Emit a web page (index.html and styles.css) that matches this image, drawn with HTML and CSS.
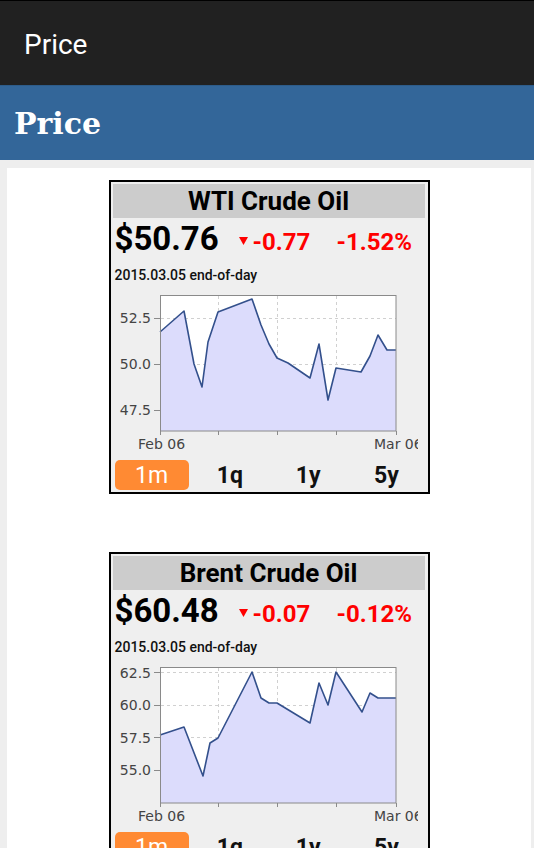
FILE: index.html
```html
<html>
  <head>
    <meta charset="utf-8" />
    <meta name="viewport" content="width=device-width, initial-scale=1.0" />
    <title>Price</title>
    <link rel="stylesheet" href="styles.css">
  </head>
  <body>
    <div class="page">
      <div class="actionbar">Price</div>
      <div class="header">Price</div>
      <div class="content">
        <div class="card">
          <div class="widget">
            <div class="title">WTI Crude Oil</div>
            <div class="quote">
              <span class="price">$50.76</span>
              <span class="change"><svg class="arrow" width="9" height="8" viewBox="0 0 9 8"><polygon points="0,0 9,0 4.5,8" fill="#ff0000"/></svg>-0.77</span>
              <span class="pct">-1.52%</span>
            </div>
            <div class="date">2015.03.05 end-of-day</div>
            <svg class="chart" width="305" height="168" viewBox="0 0 305 168">
              <rect x="47.5" y="7.5" width="235.5" height="135.5" fill="#fff"/>
              <g stroke="#d0d0d0" stroke-dasharray="3,3" stroke-width="1">
                <line x1="48" y1="30.5" x2="283" y2="30.5"/>
                <line x1="48" y1="76.5" x2="283" y2="76.5"/>
                <line x1="48" y1="122.5" x2="283" y2="122.5"/>
                <line x1="105.5" y1="8" x2="105.5" y2="143"/>
                <line x1="164.5" y1="8" x2="164.5" y2="143"/>
                <line x1="223.5" y1="8" x2="223.5" y2="143"/>
              </g>
              <polygon fill="#dcdcfc" points="47,44 71,23 81,76 89,99 95,54 105,24 139,11 148,37 156,56 164,70 175,75 197,90 206,56 215,112 223,80 248,84 257,68 265,47 274,62 283,62 283,143 47,143"/>
              <polyline fill="none" stroke="#33508c" stroke-width="1.6" stroke-linejoin="round" points="47,44 71,23 81,76 89,99 95,54 105,24 139,11 148,37 156,56 164,70 175,75 197,90 206,56 215,112 223,80 248,84 257,68 265,47 274,62 283,62"/>
              <rect x="47.5" y="7.5" width="235.5" height="135.5" fill="none" stroke="#8a8a8a"/>
              <g stroke="#8a8a8a">
                <line x1="41" y1="30.5" x2="47" y2="30.5"/>
                <line x1="41" y1="76.5" x2="47" y2="76.5"/>
                <line x1="41" y1="122.5" x2="47" y2="122.5"/>
                <line x1="47.5" y1="143" x2="47.5" y2="147"/>
                <line x1="105.5" y1="143" x2="105.5" y2="147"/>
                <line x1="164.5" y1="143" x2="164.5" y2="147"/>
                <line x1="223.5" y1="143" x2="223.5" y2="147"/>
                <line x1="283.5" y1="143" x2="283.5" y2="147"/>
              </g>
              <g class="axis">
                <text x="38" y="35" text-anchor="end">52.5</text>
                <text x="38" y="81" text-anchor="end">50.0</text>
                <text x="38" y="127" text-anchor="end">47.5</text>
                <text x="25" y="161">Feb 06</text>
                <text x="261" y="161">Mar 06</text>
              </g>
            </svg>
            <div class="tabs">
              <div class="tab active">1m</div>
              <div class="tab">1q</div>
              <div class="tab">1y</div>
              <div class="tab">5y</div>
            </div>
          </div>

          <div class="widget">
            <div class="title">Brent Crude Oil</div>
            <div class="quote">
              <span class="price">$60.48</span>
              <span class="change"><svg class="arrow" width="9" height="8" viewBox="0 0 9 8"><polygon points="0,0 9,0 4.5,8" fill="#ff0000"/></svg>-0.07</span>
              <span class="pct">-0.12%</span>
            </div>
            <div class="date">2015.03.05 end-of-day</div>
            <svg class="chart" width="305" height="168" viewBox="0 0 305 168">
              <rect x="47.5" y="7.5" width="235.5" height="135.5" fill="#fff"/>
              <g stroke="#d0d0d0" stroke-dasharray="3,3" stroke-width="1">
                <line x1="48" y1="12.5" x2="283" y2="12.5"/>
                <line x1="48" y1="45.5" x2="283" y2="45.5"/>
                <line x1="48" y1="77.5" x2="283" y2="77.5"/>
                <line x1="48" y1="110.5" x2="283" y2="110.5"/>
                <line x1="105.5" y1="8" x2="105.5" y2="143"/>
                <line x1="164.5" y1="8" x2="164.5" y2="143"/>
                <line x1="223.5" y1="8" x2="223.5" y2="143"/>
              </g>
              <polygon fill="#dcdcfc" points="47,75 71,67 90,116 97,83 105,78 139,12 148,38 156,43 164,43 197,63 206,23 215,45 223,12 249,52 257,33 265,38 283,38 283,143 47,143"/>
              <polyline fill="none" stroke="#33508c" stroke-width="1.6" stroke-linejoin="round" points="47,75 71,67 90,116 97,83 105,78 139,12 148,38 156,43 164,43 197,63 206,23 215,45 223,12 249,52 257,33 265,38 283,38"/>
              <rect x="47.5" y="7.5" width="235.5" height="135.5" fill="none" stroke="#8a8a8a"/>
              <g stroke="#8a8a8a">
                <line x1="41" y1="12.5" x2="47" y2="12.5"/>
                <line x1="41" y1="45.5" x2="47" y2="45.5"/>
                <line x1="41" y1="77.5" x2="47" y2="77.5"/>
                <line x1="41" y1="110.5" x2="47" y2="110.5"/>
                <line x1="47.5" y1="143" x2="47.5" y2="147"/>
                <line x1="105.5" y1="143" x2="105.5" y2="147"/>
                <line x1="164.5" y1="143" x2="164.5" y2="147"/>
                <line x1="223.5" y1="143" x2="223.5" y2="147"/>
                <line x1="283.5" y1="143" x2="283.5" y2="147"/>
              </g>
              <g class="axis">
                <text x="38" y="17.5" text-anchor="end">62.5</text>
                <text x="38" y="50" text-anchor="end">60.0</text>
                <text x="38" y="82.5" text-anchor="end">57.5</text>
                <text x="38" y="115" text-anchor="end">55.0</text>
                <text x="25" y="161">Feb 06</text>
                <text x="261" y="161">Mar 06</text>
              </g>
            </svg>
            <div class="tabs">
              <div class="tab active">1m</div>
              <div class="tab">1q</div>
              <div class="tab">1y</div>
              <div class="tab">5y</div>
            </div>
          </div>
        </div>
      </div>
      <div class="footer"></div>
    </div>
  </body>
</html>
```

FILE: styles.css
```css
* {
  margin: 0;
  padding: 0;
  box-sizing: border-box;
}
body {
  background: #eeeeee;
  font-family: Roboto, "Liberation Sans", sans-serif;
}
.page {
  display: flex;
  flex-direction: column;
  height: 865px;
  overflow: hidden;
}
.actionbar {
  flex: none;
  height: 85px;
  background: #212121;
  border-top: 1px solid #000;
  color: #fff;
  font-size: 28px;
  line-height: 87px;
  padding-left: 24px;
}
.header {
  flex: none;
  height: 75px;
  background: #336699;
  border-top: 1px solid #2d5c8a;
  color: #fff;
  font-family: "DejaVu Serif", serif;
  font-weight: bold;
  font-size: 30px;
  line-height: 76px;
  padding-left: 14px;
}
.content {
  flex: 1;
  overflow: hidden;
  background: #eeeeee;
  padding: 8px 3px 0 7px;
}
.card {
  background: #fff;
  height: 100%;
  padding-top: 12px;
}
.widget {
  width: 321px;
  margin: 0 auto 58px;
  border: 2px solid #000;
  padding: 2px;
  background: #efefef;
}
.title {
  height: 34px;
  line-height: 34px;
  margin-right: 1px;
  background: #cccccc;
  text-align: center;
  font-size: 26px;
  font-weight: bold;
  color: #000;
}
.quote {
  display: flex;
  align-items: baseline;
  height: 40px;
  padding-top: 2px;
  line-height: 38px;
}
.price {
  width: 124px;
  padding-left: 2px;
  font-size: 33px;
  font-weight: bold;
  color: #000;
}
.change {
  width: 100px;
  padding-left: 2px;
  font-size: 24px;
  font-weight: bold;
  color: #ff0000;
}
.change .arrow {
  margin-right: 5px;
  vertical-align: 5px;
}
.pct {
  font-size: 24px;
  font-weight: bold;
  color: #ff0000;
}
.date {
  height: 30px;
  padding: 4px 0 0 2px;
  line-height: 26px;
  font-size: 14px;
  font-weight: 500;
  color: #111;
}
.chart {
  display: block;
}
.axis {
  font-family: "DejaVu Sans", sans-serif;
  font-size: 14px;
  fill: #444;
}
.tabs {
  display: flex;
  margin-top: 4px;
  height: 30px;
}
.tab {
  width: 78px;
  margin: 0 2px;
  border-radius: 5px;
  text-align: center;
  line-height: 31px;
  font-size: 23px;
  font-weight: bold;
  color: #111;
}
.tab.active {
  background: #ff8a33;
  color: #fff;
  font-weight: normal;
}
.footer {
  flex: none;
  height: 17px;
  background: #fff;
}
```
